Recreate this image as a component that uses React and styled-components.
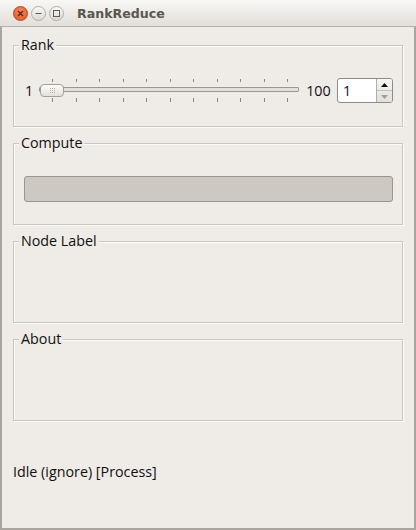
import React from "react";
import styled, { createGlobalStyle } from "styled-components";

const GlobalStyle = createGlobalStyle`
  html, body { margin: 0; padding: 0; background: #efebe7; }
  body { font-family: "Open Sans", "DejaVu Sans", sans-serif; }
  * { box-sizing: border-box; }
`;

const Window = styled.div`
  width: 416px;
  height: 530px;
  background: #efebe7;
  border-left: 2px solid #aaa59f;
  border-right: 2px solid #aaa59f;
  border-bottom: 2px solid #aaa59f;
  display: flex;
  flex-direction: column;
  color: #1a1a1a;
`;

const TitleBar = styled.div`
  height: 27px;
  flex: none;
  display: flex;
  align-items: center;
  padding-left: 13px;
  background: linear-gradient(#f8f7f5, #e2ded9);
  border-bottom: 1px solid #b6b0a9;
  margin: 0 -2px 0 -2px;
  padding-right: 2px;
`;

const Controls = styled.div`
  display: flex;
  gap: 3px;
  margin-right: 13px;
`;

const WinButton = styled.div`
  width: 15px;
  height: 15px;
  border-radius: 50%;
  display: flex;
  align-items: center;
  justify-content: center;
  border: 1px solid ${(p) => (p.$close ? "#b8451f" : "#b1aca6")};
  background: ${(p) =>
    p.$close
      ? "radial-gradient(circle at 50% 35%, #f68a64, #e0521f)"
      : "linear-gradient(#fbfaf9, #dcd8d3)"};
`;

const Title = styled.span`
  font-family: "DejaVu Sans", sans-serif;
  font-weight: bold;
  font-size: 12.6px;
  color: #5b5650;
`;

const Content = styled.div`
  flex: 1;
  display: flex;
  flex-direction: column;
  padding: 18px 11px 0 11px;
`;

const Groups = styled.div`
  display: flex;
  flex-direction: column;
  gap: 16px;
`;

const Group = styled.div`
  position: relative;
  height: 82px;
  border: 1px solid #cbc6c0;
  box-shadow: inset 1px 1px 0 #fbfaf9, 1px 1px 0 #fbfaf9;
  padding: ${(p) => p.$pad || "0"};
`;

const GroupTitle = styled.span`
  position: absolute;
  top: -10px;
  left: 5px;
  padding: 0 2px;
  background: #efebe7;
  font-size: 14.3px;
  line-height: 18px;
  color: #111;
`;

const SliderRow = styled.div`
  display: flex;
  align-items: center;
  height: 25px;
`;

const RangeLabel = styled.span`
  font-size: 14.3px;
  color: #111;
  margin: ${(p) => p.$m};
`;

const Slider = styled.div`
  position: relative;
  width: 260px;
  height: 23px;
  flex: none;
`;

const Ticks = styled.svg`
  position: absolute;
  left: 0;
  top: 0;
`;

const Groove = styled.div`
  position: absolute;
  left: 0;
  right: 0;
  top: 8px;
  height: 5px;
  border: 1px solid #9d978f;
  border-radius: 1px;
  background: #e3dfda;
`;

const Handle = styled.div`
  position: absolute;
  left: 1px;
  top: 5px;
  width: 24px;
  height: 13px;
  border: 1px solid #a49e97;
  border-radius: 4px;
  background: linear-gradient(#fdfdfc, #e4e0db);
  display: flex;
  align-items: center;
  justify-content: center;
`;

const Spacer = styled.div`
  flex: 1;
`;

const Spin = styled.div`
  width: 56px;
  height: 25px;
  border: 1px solid #8f8a84;
  border-radius: 3px;
  display: flex;
  background: #fff;
  overflow: hidden;
`;

const SpinValue = styled.div`
  flex: 1;
  font-size: 14.3px;
  padding-left: 5px;
  display: flex;
  align-items: center;
  color: #111;
`;

const SpinButtons = styled.div`
  width: 16px;
  border-left: 1px solid #b3aea8;
  display: flex;
  flex-direction: column;
  background: linear-gradient(#f7f6f4, #e3dfda);
`;

const SpinBtn = styled.div`
  flex: 1;
  display: flex;
  align-items: center;
  justify-content: center;
  border-top: ${(p) => (p.$down ? "1px solid #c4bfb9" : "none")};
`;

const Progress = styled.div`
  height: 26px;
  border: 1px solid #9a958f;
  border-radius: 3px;
  background: #cdc8c2;
`;

const Status = styled.div`
  margin-top: 42px;
  font-size: 14.3px;
  line-height: 18px;
  color: #111;
`;

function TickMarks() {
  const xs = Array.from({ length: 11 }, (_, i) => 13 + i * 23.5);
  return (
    <Ticks width="260" height="23">
      {xs.map((x) => {
        const px = Math.round(x) + 0.5;
        return (
          <g key={x} stroke="#8d8780" strokeWidth="1">
            <line x1={px} y1="0" x2={px} y2="3" />
            <line x1={px} y1="19" x2={px} y2="23" />
          </g>
        );
      })}
    </Ticks>
  );
}

function Grip() {
  const dots = [];
  for (let r = 0; r < 3; r++)
    for (let c = 0; c < 3; c++)
      dots.push(<rect key={`${r}-${c}`} x={c * 2} y={r * 2} width="1" height="1" fill="#b7b1aa" />);
  return (
    <svg width="5" height="5">
      {dots}
    </svg>
  );
}

export default function App() {
  return (
    <>
      <GlobalStyle />
      <Window>
        <TitleBar>
          <Controls>
            <WinButton $close>
              <svg width="7" height="7">
                <path d="M1 1 L6 6 M6 1 L1 6" stroke="#5a2414" strokeWidth="1.3" />
              </svg>
            </WinButton>
            <WinButton>
              <svg width="7" height="7">
                <path d="M0.5 3.5 H6.5" stroke="#5e5a55" strokeWidth="1" />
              </svg>
            </WinButton>
            <WinButton>
              <svg width="7" height="7">
                <rect x="0.5" y="0.5" width="6" height="6" fill="none" stroke="#5e5a55" strokeWidth="1" />
              </svg>
            </WinButton>
          </Controls>
          <Title>RankReduce</Title>
        </TitleBar>
        <Content>
          <Groups>
            <Group $pad="32px 9px 0 11px">
              <GroupTitle>Rank</GroupTitle>
              <SliderRow>
                <RangeLabel $m="0 6px 0 0">1</RangeLabel>
                <Slider>
                  <TickMarks />
                  <Groove />
                  <Handle>
                    <Grip />
                  </Handle>
                </Slider>
                <RangeLabel $m="0 0 0 7px">100</RangeLabel>
                <Spacer />
                <Spin>
                  <SpinValue>1</SpinValue>
                  <SpinButtons>
                    <SpinBtn>
                      <svg width="7" height="4">
                        <path d="M0 4 L3.5 0 L7 4 Z" fill="#111" />
                      </svg>
                    </SpinBtn>
                    <SpinBtn $down>
                      <svg width="7" height="4">
                        <path d="M0 0 L3.5 4 L7 0 Z" fill="#a39e98" />
                      </svg>
                    </SpinBtn>
                  </SpinButtons>
                </Spin>
              </SliderRow>
            </Group>
            <Group $pad="32px 9px 0 10px">
              <GroupTitle>Compute</GroupTitle>
              <Progress />
            </Group>
            <Group>
              <GroupTitle>Node Label</GroupTitle>
            </Group>
            <Group>
              <GroupTitle>About</GroupTitle>
            </Group>
          </Groups>
          <Status>Idle (ignore) [Process]</Status>
        </Content>
      </Window>
    </>
  );
}
